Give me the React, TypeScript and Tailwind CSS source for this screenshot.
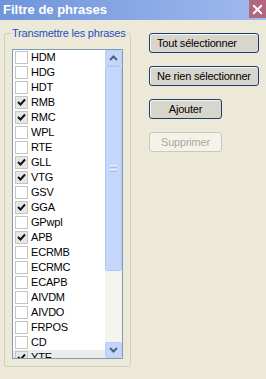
import { X } from 'lucide-react'

const phrases: [string, boolean][] = [
  ['HDM', false],
  ['HDG', false],
  ['HDT', false],
  ['RMB', true],
  ['RMC', true],
  ['WPL', false],
  ['RTE', false],
  ['GLL', true],
  ['VTG', true],
  ['GSV', false],
  ['GGA', true],
  ['GPwpl', false],
  ['APB', true],
  ['ECRMB', false],
  ['ECRMC', false],
  ['ECAPB', false],
  ['AIVDM', false],
  ['AIVDO', false],
  ['FRPOS', false],
  ['CD', false],
  ['YTE', true],
]

function CheckBox({ checked }: { checked: boolean }) {
  return (
    <span
      className={
        'flex h-[13px] w-[13px] shrink-0 items-center justify-center border border-[#c4c4c4] ' +
        (checked ? 'bg-[#e6e6e6]' : 'bg-white')
      }
    >
      {checked && (
        <svg width="9" height="9" viewBox="0 0 9 9">
          <polyline points="1,4 3.5,6.5 8,1.5" fill="none" stroke="#111" strokeWidth="1.9" />
        </svg>
      )}
    </span>
  )
}

function Arrow({ up }: { up?: boolean }) {
  return (
    <svg width="9" height="6" viewBox="0 0 9 6">
      <polyline
        points={up ? '1,5 4.5,1.5 8,5' : '1,1 4.5,4.5 8,1'}
        fill="none"
        stroke="#4d6185"
        strokeWidth="2"
      />
    </svg>
  )
}

function Scrollbar() {
  return (
    <div className="flex w-[17px] shrink-0 flex-col bg-[#f4f3ee]">
      <div className="flex h-[16px] items-center justify-center rounded-[2px] border border-[#bccdf4] bg-[#c5d6fb]">
        <Arrow up />
      </div>
      <div className="flex h-[205px] items-center justify-center rounded-[2px] border border-[#b3c6f3] bg-[#c6d7fc]">
        <div className="flex flex-col gap-[1px]">
          <span className="block h-px w-[7px] bg-[#eef3fe]" />
          <span className="block h-px w-[7px] bg-[#a9bdea]" />
          <span className="block h-px w-[7px] bg-[#eef3fe]" />
          <span className="block h-px w-[7px] bg-[#a9bdea]" />
        </div>
      </div>
      <div className="h-[71px]" />
      <div className="flex h-[16px] items-center justify-center rounded-[2px] border border-[#bccdf4] bg-[#c5d6fb]">
        <Arrow />
      </div>
    </div>
  )
}

function WinButton({ label, disabled, left }: { label: string; disabled?: boolean; left?: boolean }) {
  return (
    <button
      disabled={disabled}
      className={
        'flex h-[20px] items-center rounded-[3px] border ' +
        (left ? 'w-[110px] justify-start pl-[7px] ' : 'w-[73px] justify-center ') +
        (disabled
          ? 'border-[#cac8bb] bg-[#f4f3ea] text-[#aca899]'
          : 'border-[#1c3f6e] bg-[#d8d5cc] text-black shadow-[inset_1px_1px_0_#f7f6f2]')
      }
    >
      {label}
    </button>
  )
}

export default function App() {
  return (
    <div className="h-[379px] w-[266px] overflow-hidden bg-[#ece9d8] font-['Liberation_Sans',Arial,sans-serif] text-[11px] tracking-[-0.2px] text-black">
      <div className="flex h-[20px] items-start bg-gradient-to-r from-[#6f94da] to-[#a1baee]">
        <span className="pl-[3px] pt-[2px] text-[13px] font-bold leading-[16px] tracking-normal text-white">
          Filtre de phrases
        </span>
        <span className="ml-auto flex h-[18px] w-[17px] items-center justify-center bg-[#b2667f]">
          <X size={15} strokeWidth={3} color="#fff" />
        </span>
      </div>

      <div className="flex pl-[4px]">
        <div className="relative mt-[13px] w-[127px] rounded-[3px] border border-[#d0cebf] pb-[7px] pl-[7px] pr-[7px] pt-[15px]">
          <span className="absolute left-[6px] top-[-8px] bg-[#ece9d8] px-[1px] leading-[14px] text-[#1f4fbf]">
            Transmettre les phrases
          </span>
          <div className="flex h-[310px] w-[111px] overflow-hidden border border-[#7f9db9] bg-white">
            <div className="flex min-w-0 flex-1 flex-col">
              {phrases.map(([name, checked], i) => (
                <div
                  key={name}
                  className={
                    'flex h-[15px] shrink-0 items-center gap-[3px] pl-[2px] leading-[15px] ' +
                    (i === phrases.length - 1 ? 'bg-[#ececec]' : '')
                  }
                >
                  <CheckBox checked={checked} />
                  <span>{name}</span>
                </div>
              ))}
            </div>
            <Scrollbar />
          </div>
        </div>

        <div className="ml-[18px] mt-[13px] flex flex-col gap-[13px]">
          <WinButton label="Tout sélectionner" left />
          <WinButton label="Ne rien sélectionner" left />
          <WinButton label="Ajouter" />
          <WinButton label="Supprimer" disabled />
        </div>
      </div>
    </div>
  )
}
